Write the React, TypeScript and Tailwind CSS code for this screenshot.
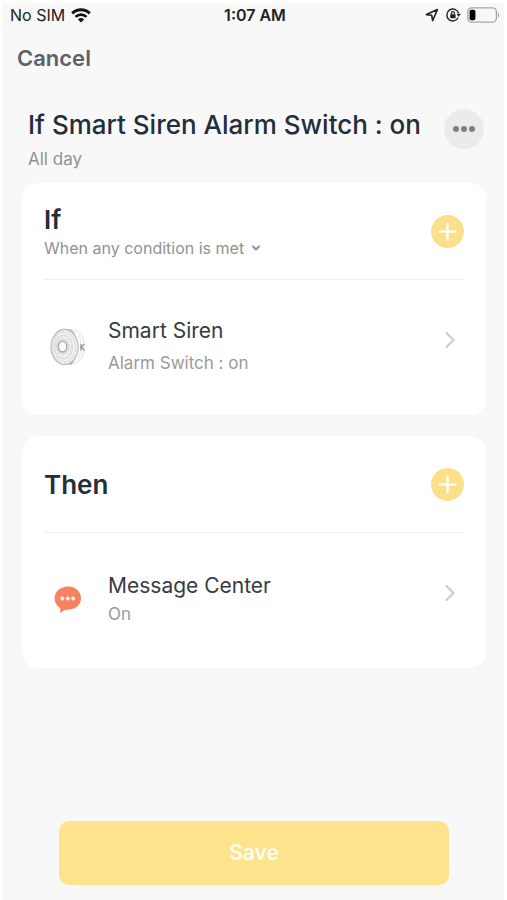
import type { ReactNode } from "react";
import { ChevronDown, ChevronRight, Plus } from "lucide-react";

const focusRing =
  "focus-visible:outline-none focus-visible:ring-2 focus-visible:ring-amber-400";

function WifiIcon() {
  return (
    <svg viewBox="0 0 20 15" className="h-[15px] w-5" fill="none" aria-hidden="true">
      <path d="M1.2 5.4a12.6 12.6 0 0 1 17.6 0" stroke="#111" strokeWidth="2.9" />
      <path d="M4.5 8.9a7.9 7.9 0 0 1 11 0" stroke="#111" strokeWidth="2.6" />
      <path d="M10 14.6 6.9 11.5a4.5 4.5 0 0 1 6.2 0z" fill="#111" />
    </svg>
  );
}

function LocationIcon() {
  return (
    <svg viewBox="0 0 14 14" className="h-[14px] w-[14px]" fill="none" aria-hidden="true">
      <path
        d="M12.4 1.6 1.4 6.6l5.3.7.9 5.4z"
        stroke="#222"
        strokeWidth="1.6"
        strokeLinejoin="round"
      />
    </svg>
  );
}

function RotationLockIcon() {
  return (
    <svg viewBox="0 0 16 16" className="h-4 w-4" fill="none" aria-hidden="true">
      <path d="M13.2 10.8A6 6 0 1 1 13.6 6.2" stroke="#222" strokeWidth="1.4" />
      <path d="M11.6 6.8h4.2l-2.1 3.2z" fill="#222" />
      <rect x="5.2" y="7.2" width="5.4" height="4" rx="0.6" fill="#222" />
      <path d="M6.4 7.4V6.200a1.500 1.500 0 0 1 3 0v1.200" stroke="#222" strokeWidth="1.200" />
    </svg>
  );
}

function BatteryIcon() {
  return (
    <svg viewBox="0 0 33 16" className="h-4 w-[33px]" fill="none" aria-hidden="true">
      <rect x="0.8" y="0.8" width="28.6" height="14.4" rx="4" stroke="#a6a6a6" strokeWidth="1.3" />
      <rect x="2.6" y="2.8" width="5.8" height="10.4" rx="1.8" fill="#000" />
      <path d="M31 5.4c1.6.6 1.6 4.6 0 5.2z" fill="#a6a6a6" />
    </svg>
  );
}

function SirenIcon() {
  return (
    <svg viewBox="0 0 36 38" className="h-[38px] w-9" fill="none" aria-hidden="true">
      <path
        d="M15 1.4c9-.4 14.500 2 17 6 3 5 3 17-.5 23-3 4-8.500 6.400-16.500 6.200z"
        fill="#fcfcfc"
        stroke="#dedede"
        strokeWidth="0.9"
      />
      <path d="M20 2c8.500 5 8.500 29 0 34.500" stroke="#adadad" strokeWidth="1.500" />
      <path d="M29 6c2.500 6 2.500 20-1 26" stroke="#e6e6e6" strokeWidth="1" />
      <path d="M31 16v6.500M34.400 16l-2.800 3.200 2.800 3.300" stroke="#8f8f8f" strokeWidth="1.200" />
      <ellipse cx="14.600" cy="19" rx="13.600" ry="17.600" fill="#f0f0f0" stroke="#b8b8b8" strokeWidth="1.100" />
      <ellipse cx="14" cy="19" rx="11.600" ry="15.200" stroke="#cecece" strokeWidth="1.400" strokeDasharray="1 1" />
      <ellipse cx="13.400" cy="19" rx="8.800" ry="11.600" stroke="#cecece" strokeWidth="1.600" strokeDasharray="1.200 0.900" />
      <ellipse cx="12.800" cy="18.800" rx="6.200" ry="7.600" stroke="#d6d6d6" strokeWidth="1.200" />
      <ellipse cx="12.600" cy="18.600" rx="4.200" ry="5.400" fill="#fff" stroke="#a8a8a8" strokeWidth="1.500" />
    </svg>
  );
}

function MessageIcon() {
  return (
    <svg viewBox="0 0 28 27" className="h-[27px] w-7" aria-hidden="true">
      <path
        d="M14 .5c7.400 0 13 4.900 13 11.600 0 6.800-5.600 11.500-12.800 11.600-1.700 0-3.100.1-4.200.7L6.800 26.600c-.4.300-.8 0-.7-.5l.3-3.800C2.700 20 .6 16.500.6 12.300.6 5.500 6.400.5 14 .5z"
        fill="#f5835f"
      />
      <g fill="#fff0ea">
        <circle cx="8.400" cy="12.500" r="1.900" />
        <circle cx="13.800" cy="12.500" r="1.900" />
        <circle cx="19.200" cy="12.500" r="1.900" />
      </g>
    </svg>
  );
}

function StatusBar() {
  return (
    <div className="grid grid-cols-3 items-center pr-1 pl-2 text-base leading-6 text-[#222]">
      <div className="flex items-center gap-1.5">
        <span>No SIM</span>
        <WifiIcon />
      </div>
      <span className="text-center font-semibold">1:07 AM</span>
      <div className="flex items-center justify-end gap-1.5">
        <LocationIcon />
        <RotationLockIcon />
        <BatteryIcon />
      </div>
    </div>
  );
}

function AddButton({ label }: { label: string }) {
  return (
    <button
      type="button"
      aria-label={label}
      className={`flex size-[33px] shrink-0 items-center justify-center rounded-full bg-[#fbe08a] text-white ${focusRing}`}
    >
      <Plus size={27} strokeWidth={2} />
    </button>
  );
}

function SceneCard({ header, addLabel, children }: {
  header: ReactNode;
  addLabel: string;
  children: ReactNode;
}) {
  return (
    <section className="rounded-2xl bg-white px-[22px]">
      <div className="flex h-[97px] items-center justify-between border-b border-[#f0f0f0]">
        {header}
        <AddButton label={addLabel} />
      </div>
      {children}
    </section>
  );
}

function SceneRow({ icon, title, detail, spacing }: {
  icon: ReactNode;
  title: string;
  detail: string;
  spacing: string;
}) {
  return (
    <button
      type="button"
      className={`flex h-[135px] w-full items-center pb-4 text-left ${focusRing}`}
    >
      <span className="flex w-12 shrink-0 justify-center pt-3.5">{icon}</span>
      <span className={`flex flex-1 flex-col pt-3 pl-4 ${spacing}`}>
        <span className="text-[21px] leading-7 text-[#373c42]">{title}</span>
        <span className="text-[17px] leading-6 text-[#9a9a9a]">{detail}</span>
      </span>
      <ChevronRight size={28} strokeWidth={2} className="shrink-0 text-[#cfcfcf]" />
    </button>
  );
}

export default function App() {
  return (
    <div className="min-h-screen bg-white pt-[3px] pr-[3px] pl-[2px] font-['Inter','Liberation_Sans',sans-serif]">
      <div className="flex min-h-[calc(100vh-3px)] flex-col bg-[#f8f8f8]">
        <StatusBar />
        <header className="px-[15px] pt-4">
          <button
            type="button"
            className={`block text-[22px] leading-[30px] font-semibold text-[#5b6168] ${focusRing}`}
          >
            Cancel
          </button>
        </header>

        <main className="flex flex-1 flex-col pt-9 pr-[18px] pl-5">
          <div className="flex items-start justify-between pr-0.5 pb-3 pl-1.5">
            <div>
              <h1 className="text-[26px] leading-8 font-medium text-[#242d3a]">
                If Smart Siren Alarm Switch : on
              </h1>
              <p className="pt-1.5 text-[17px] leading-6 text-[#929292]">All day</p>
            </div>
            <button
              type="button"
              aria-label="More options"
              className={`flex size-10 shrink-0 items-center justify-center gap-0.5 rounded-full bg-[#ebebeb] ${focusRing}`}
            >
              <span className="size-[6px] rounded-full bg-[#808080]" />
              <span className="size-[6px] rounded-full bg-[#808080]" />
              <span className="size-[6px] rounded-full bg-[#808080]" />
            </button>
          </div>

          <div className="flex flex-col gap-[21px]">
            <SceneCard
              addLabel="Add condition"
              header={
                <div className="pt-0.5">
                  <h2 className="text-[26px] leading-8 font-semibold text-[#242d3a]">If</h2>
                  <button
                    type="button"
                    className={`flex items-center gap-1.5 text-base leading-6 text-[#929292] ${focusRing}`}
                  >
                    When any condition is met
                    <ChevronDown size={12} strokeWidth={4} />
                  </button>
                </div>
              }
            >
              <SceneRow
                icon={<SirenIcon />}
                title="Smart Siren"
                detail="Alarm Switch : on"
                spacing="gap-1.5"
              />
            </SceneCard>

            <SceneCard
              addLabel="Add action"
              header={
                <h2 className="pt-0.5 text-[26px] leading-8 font-semibold text-[#242d3a]">
                  Then
                </h2>
              }
            >
              <SceneRow
                icon={<MessageIcon />}
                title="Message Center"
                detail="On"
                spacing="gap-0.5"
              />
            </SceneCard>
          </div>

          <div className="mt-auto px-[37px] pb-[15px]">
            <button
              type="button"
              className={`h-16 w-full rounded-[10px] bg-[#fde38c] text-[21px] font-semibold text-[#fffdf0] ${focusRing}`}
            >
              Save
            </button>
          </div>
        </main>
      </div>
    </div>
  );
}
